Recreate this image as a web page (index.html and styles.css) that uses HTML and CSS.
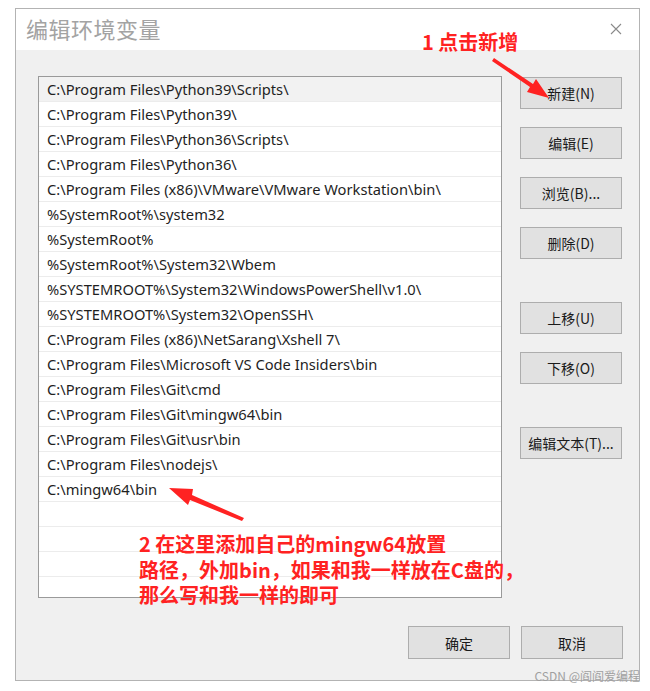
FILE: index.html
```html
<!DOCTYPE html>
<html lang="zh-CN">
<head>
  <meta charset="UTF-8"/>
  <meta name="viewport" content="width=device-width,initial-scale=1.0"/>
  <title>编辑环境变量</title>
  <link rel="stylesheet" href="styles.css">
</head>
<body>
  <div class="window">
    <div class="titlebar">
      <span class="title">编辑环境变量</span>
      <svg class="close" width="12" height="12" viewBox="0 0 12 12"><path d="M1 1L11 11M11 1L1 11" stroke="#8a8a8a" stroke-width="1.1" fill="none"/></svg>
    </div>
    <div class="content">
      <div class="main">
        <ul class="list">
          <li class="sel">C:\Program Files\Python39\Scripts\</li>
          <li>C:\Program Files\Python39\</li>
          <li>C:\Program Files\Python36\Scripts\</li>
          <li>C:\Program Files\Python36\</li>
          <li>C:\Program Files (x86)\VMware\VMware Workstation\bin\</li>
          <li>%SystemRoot%\system32</li>
          <li>%SystemRoot%</li>
          <li>%SystemRoot%\System32\Wbem</li>
          <li>%SYSTEMROOT%\System32\WindowsPowerShell\v1.0\</li>
          <li>%SYSTEMROOT%\System32\OpenSSH\</li>
          <li>C:\Program Files (x86)\NetSarang\Xshell 7\</li>
          <li>C:\Program Files\Microsoft VS Code Insiders\bin</li>
          <li>C:\Program Files\Git\cmd</li>
          <li>C:\Program Files\Git\mingw64\bin</li>
          <li>C:\Program Files\Git\usr\bin</li>
          <li>C:\Program Files\nodejs\</li>
          <li>C:\mingw64\bin</li>
          <li></li>
          <li></li>
          <li></li>
          <li></li>
        </ul>
        <div class="side">
          <button class="btn">新建(N)</button>
          <button class="btn">编辑(E)</button>
          <button class="btn">浏览(B)...</button>
          <button class="btn">删除(D)</button>
          <button class="btn group">上移(U)</button>
          <button class="btn">下移(O)</button>
          <button class="btn group">编辑文本(T)...</button>
        </div>
      </div>
      <div class="footer">
        <button class="btn">确定</button>
        <button class="btn">取消</button>
      </div>
    </div>
  </div>

  <!-- 标注 -->
  <div class="note note1">1 点击新增</div>
  <div class="note note2">2 在这里添加自己的mingw64放置<br>路径，外加bin，如果和我一样放在C盘的，<br>那么写和我一样的即可</div>
  <svg class="arrows" width="650" height="691" viewBox="0 0 650 691">
    <polygon points="492,61 494,58 533,84 536,79 549,98 527,92 530,87" fill="#f22"/>
    <polygon points="244,518 242,521 190,500 188,505 169,488 193,489 192,495" fill="#f22"/>
  </svg>
  <div class="mark">CSDN @阎阎爱编程</div>
</body>
</html>
```

FILE: styles.css
```css
body { margin:0; background:#fff; font-family:"Noto Sans","Noto Sans CJK SC",sans-serif; color:#1a1a1a; position:relative; width:650px; height:691px; overflow:hidden; }
.window { margin:8px 0 0 15px; width:625px; height:673px; border:1px solid #b3b3b3; box-sizing:border-box; display:flex; flex-direction:column; }
.titlebar { height:41px; background:#fff; display:flex; align-items:center; justify-content:space-between; padding:0 17px 0 10px; }
.title { font-family:"Noto Sans CJK SC",sans-serif; font-size:22px; color:#a3a3a3; letter-spacing:0.5px; margin-top:-3px; }
.close { margin-top:-2px; }
.content { flex:1; background:#f0f0f0; padding:26px 16px 0 22px; display:flex; flex-direction:column; }
.main { display:flex; gap:18px; }
.list { list-style:none; margin:0; padding:0; width:464px; height:522px; box-sizing:border-box; border:1px solid #9a9a9a; background:#fff; overflow:hidden; }
.list li { height:25px; box-sizing:border-box; border-bottom:1px solid #ececec; padding:0 0 0 8px; font-size:14.7px; line-height:25px; white-space:nowrap; color:#1f1f1f; }
.list li.sel { background:#f2f2f2; }
.side { display:flex; flex-direction:column; gap:18px; padding-top:1px; }
.btn { width:102px; height:32px; background:#e1e1e1; border:1px solid #adadad; font-family:"Noto Sans CJK SC",sans-serif; font-size:14px; color:#1a1a1a; padding:0; }
.side .group { margin-top:25px; }
.footer { display:flex; justify-content:flex-end; gap:11px; margin-top:28px; }
.footer .btn { height:33px; }
.note { position:absolute; font-family:"Noto Sans CJK SC",sans-serif; font-weight:bold; color:#f22; }
.note1 { left:422px; top:27px; font-size:20px; }
.note2 { left:139px; top:531px; font-size:20px; line-height:25.5px; }
.arrows { position:absolute; left:0; top:0; }
.mark { position:absolute; right:10px; top:667px; font-family:"Noto Sans CJK SC",sans-serif; font-size:12px; color:#a0a0a0; }
```
